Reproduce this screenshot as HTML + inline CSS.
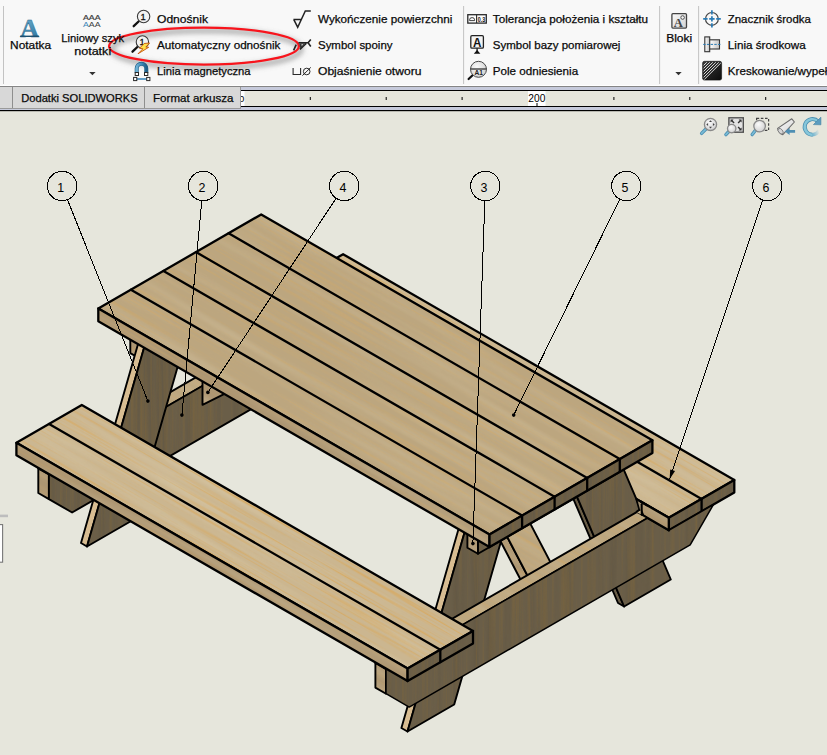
<!DOCTYPE html><html><head><meta charset="utf-8"><title>SOLIDWORKS - Automatyczny odnośnik</title>
<style>html,body{margin:0;padding:0;background:#e6e6dc;width:827px;height:755px;overflow:hidden}svg{display:block;position:absolute;left:0;top:0}text{font-family:"Liberation Sans",sans-serif}.sf{font-family:"Liberation Serif",serif}</style></head><body>
<svg width="827" height="755" viewBox="0 0 827 755">

<defs>
<filter id="fg1" x="0" y="0" width="100%" height="100%" color-interpolation-filters="sRGB">
<feTurbulence type="fractalNoise" baseFrequency="0.005 0.5" numOctaves="2" seed="7" stitchTiles="stitch" result="n"/>
<feColorMatrix in="n" type="matrix" values="0 0 0 0 0.85  0 0 0 0 0.66  0 0 0 0 0.36  3.4 0 0 0 -1.75"/>
</filter>
<filter id="fg2" x="0" y="0" width="100%" height="100%" color-interpolation-filters="sRGB">
<feTurbulence type="fractalNoise" baseFrequency="0.004 0.1" numOctaves="2" seed="11" stitchTiles="stitch" result="n"/>
<feColorMatrix in="n" type="matrix" values="0 0 0 0 0.84  0 0 0 0 0.78  0 0 0 0 0.65  0 2.4 0 0 -1.0"/>
</filter>
<filter id="fg3" x="0" y="0" width="100%" height="100%" color-interpolation-filters="sRGB">
<feTurbulence type="fractalNoise" baseFrequency="0.3 0.006" numOctaves="3" seed="5" stitchTiles="stitch" result="n"/>
<feColorMatrix in="n" type="matrix" values="0 0 0 0 0.50  0 0 0 0 0.40  0 0 0 0 0.22  2.6 0 0 0 -1.2"/>
</filter>
<filter id="fg4" x="0" y="0" width="100%" height="100%" color-interpolation-filters="sRGB">
<feTurbulence type="fractalNoise" baseFrequency="0.12 0.004" numOctaves="2" seed="9" stitchTiles="stitch" result="n"/>
<feColorMatrix in="n" type="matrix" values="0 0 0 0 0.36  0 0 0 0 0.32  0 0 0 0 0.25  0 2.2 0 0 -0.95"/>
</filter>
<pattern id="wt" width="512" height="256" patternUnits="userSpaceOnUse" patternTransform="rotate(30)">
<rect width="512" height="256" fill="#bca67f"/>
<rect width="512" height="256" filter="url(#fg2)" opacity=".3"/>
<rect width="512" height="256" filter="url(#fg1)" opacity=".4"/>
</pattern>
<pattern id="wb" width="512" height="256" patternUnits="userSpaceOnUse" patternTransform="rotate(30) translate(40 90)">
<rect width="512" height="256" fill="#cbb690"/>
<rect width="512" height="256" filter="url(#fg2)" opacity=".6"/>
<rect width="512" height="256" filter="url(#fg1)" opacity=".85"/>
</pattern>
<pattern id="ws" width="512" height="256" patternUnits="userSpaceOnUse" patternTransform="rotate(30) translate(10 30)">
<rect width="512" height="256" fill="#ad9672"/>
<rect width="512" height="256" filter="url(#fg2)" opacity=".35"/>
<rect width="512" height="256" filter="url(#fg1)" opacity=".3"/>
</pattern>
<pattern id="wd" width="256" height="512" patternUnits="userSpaceOnUse">
<rect width="256" height="512" fill="#6a5e48"/>
<rect width="256" height="512" filter="url(#fg4)" opacity=".5"/>
<rect width="256" height="512" filter="url(#fg3)" opacity=".5"/>
</pattern>
</defs>

<defs>
<filter id="sh" x="-10%" y="-50%" width="120%" height="200%"><feGaussianBlur stdDeviation="2.8"/></filter>
<linearGradient id="gA" x1="0" y1="0" x2="0" y2="1"><stop offset="0" stop-color="#6fb0cf"/><stop offset=".7" stop-color="#3b83ab"/><stop offset="1" stop-color="#1f5678"/></linearGradient>
<linearGradient id="gM" x1="0" y1="0" x2="1" y2="0"><stop offset="0" stop-color="#ffffff"/><stop offset="1" stop-color="#c4c4c4"/></linearGradient>
<linearGradient id="gB" x1="0" y1="0" x2="1" y2="1"><stop offset="0" stop-color="#fbfbfb"/><stop offset="1" stop-color="#d2d2d2"/></linearGradient>
<linearGradient id="gH" x1="0" y1="0" x2="1" y2="1"><stop offset="0" stop-color="#3c3c3c"/><stop offset="1" stop-color="#0c0c0c"/></linearGradient>
<linearGradient id="gMag" x1="0" y1="0" x2="1" y2="0"><stop offset="0" stop-color="#6fb2d6"/><stop offset=".5" stop-color="#3f8bb8"/><stop offset="1" stop-color="#1f5f88"/></linearGradient>
<linearGradient id="gT" gradientUnits="userSpaceOnUse" x1="812" y1="134" x2="819" y2="131"><stop offset="0" stop-color="#6fb3cf"/><stop offset="1" stop-color="#e6e6dc"/></linearGradient>
<radialGradient id="gL" cx=".4" cy=".35" r=".7"><stop offset="0" stop-color="#fafafa"/><stop offset="1" stop-color="#cfcfcf"/></radialGradient>
</defs>
<rect x="0" y="0" width="827" height="755" fill="#e6e6dc"/>
<rect x="0" y="0" width="827" height="86" fill="#f8f8f8"/><rect x="0" y="85" width="827" height="1" fill="#fff"/>
<rect x="0" y="86" width="827" height="1" fill="#858585"/>
<rect x="240" y="87" width="587" height="23" fill="#c6cadb"/>
<rect x="240" y="90" width="587" height="17" fill="#e6e6dc"/>
<rect x="240" y="90" width="587" height="1" fill="#000"/>
<rect x="240" y="106" width="587" height="1" fill="#000"/>
<rect x="0" y="109" width="827" height="1" fill="#c6cadb"/>
<rect x="0" y="110" width="827" height="1.2" fill="#000"/>
<rect x="309.8" y="97" width="1" height="3" fill="#000"/>
<rect x="385.7" y="97" width="1" height="3" fill="#000"/>
<rect x="461.6" y="97" width="1" height="3" fill="#000"/>
<rect x="613.4" y="97" width="1" height="3" fill="#000"/>
<rect x="689.3" y="97" width="1" height="3" fill="#000"/>
<rect x="765.2" y="97" width="1" height="3" fill="#000"/>
<rect x="241" y="91" width="3.5" height="15" fill="#fff"/>
<text x="239" y="102" font-size="9.5" text-anchor="start" fill="#000" >0</text>
<rect x="528" y="91" width="17.5" height="15" fill="#fff"/>
<text x="536.8" y="102.3" font-size="11" text-anchor="middle" fill="#000" textLength="17" lengthAdjust="spacingAndGlyphs" >200</text>
<rect x="536.5" y="103" width="1" height="3" fill="#000"/>
<rect x="0" y="87" width="240.5" height="21" fill="#d8d8d8"/>
<rect x="0" y="108" width="241" height="1" fill="#9a9a9a"/>
<rect x="240" y="87" width="1" height="22" fill="#9a9a9a"/>
<rect x="12" y="87" width="1" height="21" fill="#8e8e8e"/>
<rect x="144" y="87" width="1" height="21" fill="#8e8e8e"/>
<text x="21.2" y="102.2" font-size="11.0" text-anchor="start" fill="#0a0a0a" stroke="#0a0a0a" stroke-width="0.25" textLength="116.5" lengthAdjust="spacingAndGlyphs" >Dodatki SOLIDWORKS</text>
<text x="153" y="102.2" font-size="11.0" text-anchor="start" fill="#0a0a0a" stroke="#0a0a0a" stroke-width="0.25" textLength="80.5" lengthAdjust="spacingAndGlyphs" >Format arkusza</text>
<rect x="3.0" y="6" width="1" height="78" fill="#c3c3c3"/>
<rect x="463.1" y="6" width="1" height="78" fill="#c3c3c3"/>
<rect x="659.1" y="6" width="1" height="78" fill="#c3c3c3"/>
<rect x="698.1" y="6" width="1" height="78" fill="#c3c3c3"/>
<ellipse cx="206.4" cy="49.2" rx="94.6" ry="18.4" fill="none" stroke="#707070" stroke-opacity=".5" stroke-width="5.5" filter="url(#sh)"/>
<ellipse cx="204" cy="46.15" rx="94.9" ry="18.45" fill="none" stroke="#f8141c" stroke-width="2.3"/>
<text x="30.6" y="48.9" font-size="11.0" text-anchor="middle" fill="#0a0a0a" stroke="#0a0a0a" stroke-width="0.25" textLength="41" lengthAdjust="spacingAndGlyphs" >Notatka</text>
<text x="92.7" y="41.9" font-size="11.0" text-anchor="middle" fill="#0a0a0a" stroke="#0a0a0a" stroke-width="0.25" textLength="63" lengthAdjust="spacingAndGlyphs" >Liniowy szyk</text>
<text x="92.7" y="54.6" font-size="11.0" text-anchor="middle" fill="#0a0a0a" stroke="#0a0a0a" stroke-width="0.25" textLength="37" lengthAdjust="spacingAndGlyphs" >notatki</text>
<polygon points="89.2,72 95.6,72 92.4,75.2" fill="#333"/>
<text x="157" y="22.8" font-size="11.0" text-anchor="start" fill="#0a0a0a" stroke="#0a0a0a" stroke-width="0.25" textLength="51" lengthAdjust="spacingAndGlyphs" >Odnośnik</text>
<text x="157" y="48.8" font-size="11.0" text-anchor="start" fill="#0a0a0a" stroke="#0a0a0a" stroke-width="0.25" textLength="123.4" lengthAdjust="spacingAndGlyphs" >Automatyczny odnośnik</text>
<text x="157" y="74.8" font-size="11.0" text-anchor="start" fill="#0a0a0a" stroke="#0a0a0a" stroke-width="0.25" textLength="93.6" lengthAdjust="spacingAndGlyphs" >Linia magnetyczna</text>
<text x="318" y="22.8" font-size="11.0" text-anchor="start" fill="#0a0a0a" stroke="#0a0a0a" stroke-width="0.25" textLength="134.4" lengthAdjust="spacingAndGlyphs" >Wykończenie powierzchni</text>
<text x="318" y="48.8" font-size="11.0" text-anchor="start" fill="#0a0a0a" stroke="#0a0a0a" stroke-width="0.25" textLength="74.5" lengthAdjust="spacingAndGlyphs" >Symbol spoiny</text>
<text x="318" y="74.8" font-size="11.0" text-anchor="start" fill="#0a0a0a" stroke="#0a0a0a" stroke-width="0.25" textLength="103.4" lengthAdjust="spacingAndGlyphs" >Objaśnienie otworu</text>
<text x="492.8" y="22.8" font-size="11.0" text-anchor="start" fill="#0a0a0a" stroke="#0a0a0a" stroke-width="0.25" textLength="155.2" lengthAdjust="spacingAndGlyphs" >Tolerancja położenia i kształtu</text>
<text x="492.8" y="48.8" font-size="11.0" text-anchor="start" fill="#0a0a0a" stroke="#0a0a0a" stroke-width="0.25" textLength="127.6" lengthAdjust="spacingAndGlyphs" >Symbol bazy pomiarowej</text>
<text x="492.8" y="74.8" font-size="11.0" text-anchor="start" fill="#0a0a0a" stroke="#0a0a0a" stroke-width="0.25" textLength="85.3" lengthAdjust="spacingAndGlyphs" >Pole odniesienia</text>
<text x="727.8" y="22.8" font-size="11.0" text-anchor="start" fill="#0a0a0a" stroke="#0a0a0a" stroke-width="0.25" textLength="83" lengthAdjust="spacingAndGlyphs" >Znacznik środka</text>
<text x="727.8" y="48.8" font-size="11.0" text-anchor="start" fill="#0a0a0a" stroke="#0a0a0a" stroke-width="0.25" textLength="78" lengthAdjust="spacingAndGlyphs" >Linia środkowa</text>
<text x="727.8" y="74.8" font-size="11.0" text-anchor="start" fill="#0a0a0a" stroke="#0a0a0a" stroke-width="0.25" textLength="99.5" lengthAdjust="spacingAndGlyphs" >Kreskowanie/wypeł</text>
<text x="679.2" y="41.8" font-size="11.0" text-anchor="middle" fill="#0a0a0a" stroke="#0a0a0a" stroke-width="0.25" textLength="26" lengthAdjust="spacingAndGlyphs" >Bloki</text>
<polygon points="675.3,72 681.7,72 678.5,75.2" fill="#333"/>
<text class="sf" x="29.6" y="36.6" font-size="26" font-weight="bold" text-anchor="middle" fill="url(#gA)" stroke="#2a6386" stroke-width=".4" textLength="19" lengthAdjust="spacingAndGlyphs">A</text>
<rect x="20.2" y="35.6" width="18.6" height="1.4" fill="#1d5070"/>
<text x="83" y="20.2" font-size="7.4" fill="#3c3c3c" stroke="#3c3c3c" stroke-width=".2" textLength="17.6" lengthAdjust="spacingAndGlyphs">AAA</text>
<text x="83" y="27.2" font-size="7.4" fill="#3c3c3c" stroke-width=".2" textLength="17.6" lengthAdjust="spacingAndGlyphs"><tspan fill="#3b86b8">A</tspan>AA</text>
<line x1="139.1" y1="21.0" x2="133.7" y2="26.2" stroke="#111" stroke-width="2.3" stroke-linecap="round"/><circle cx="143.6" cy="16.5" r="6.2" fill="#f3f3f3" stroke="#3a3a3a" stroke-width="1.1"/><text x="143.2" y="19.8" font-size="9.4" text-anchor="middle" fill="#111" stroke="#111" stroke-width=".3">1</text>
<line x1="137.9" y1="46.5" x2="132.5" y2="51.7" stroke="#111" stroke-width="2.3" stroke-linecap="round"/><circle cx="142.4" cy="42" r="6.2" fill="#f3f3f3" stroke="#3a3a3a" stroke-width="1.1"/><text x="142.0" y="45.3" font-size="9.4" text-anchor="middle" fill="#111" stroke="#111" stroke-width=".3">1</text>
<polygon points="149.6,43 144.1,43.5 139.5,48.3 142.9,48.8 138,53.8 148.7,47.3 145.8,47.1" fill="#ffe24a" stroke="#c4560c" stroke-width=".9" stroke-linejoin="round"/>
<path d="M136.7,73 V68.6 a4.8,4.8 0 0 1 9.6,0 V73" fill="none" stroke="#1f5f88" stroke-width="4"/>
<path d="M136.7,73 V68.6 a4.8,4.8 0 0 1 9.6,0 V73" fill="none" stroke="url(#gMag)" stroke-width="2.8"/>
<rect x="135.2" y="72.5" width="3.3" height="3" fill="#fff" stroke="#2a2a2a" stroke-width="1"/>
<rect x="144.5" y="72.5" width="3.3" height="3" fill="#fff" stroke="#2a2a2a" stroke-width="1"/>
<line x1="136" y1="79" x2="147" y2="79" stroke="#2f7fb6" stroke-width="1.5"/>
<rect x="133.6" y="77.4" width="3.2" height="3.2" fill="#fff" stroke="#2a2a2a" stroke-width="1"/>
<rect x="146.7" y="77.4" width="3.2" height="3.2" fill="#fff" stroke="#2a2a2a" stroke-width="1"/>
<path d="M293.4,19.4 H301.6 M293.8,19.6 L297.7,27.2 L305.3,10.9 H310.8" fill="none" stroke="#222" stroke-width="1.5" stroke-linejoin="miter"/>
<path d="M293.6,50.3 L296.2,44.6 M298.5,42.8 H308.1 L310.8,39.4 M308.1,42.8 L310.8,46.4 M299.9,49.3 L306.2,43.5" fill="none" stroke="#222" stroke-width="1.6"/>
<polygon points="299.2,43.2 305.6,43.2 300.2,48.6" fill="#333"/>
<polygon points="301.4,44.2 303.4,44.2 301.8,46" fill="#eee"/>
<path d="M293.1,68.1 V74.5 H300.6 V68.1" fill="none" stroke="#2a2a2a" stroke-width="1.1"/>
<circle cx="306.7" cy="71.5" r="3.3" fill="none" stroke="#2a2a2a" stroke-width="1"/>
<line x1="302.4" y1="75.6" x2="310.8" y2="67.4" stroke="#2a2a2a" stroke-width="1"/>
<rect x="467.8" y="14.7" width="18.5" height="8.4" fill="#fdfdfd" stroke="#2a2a2a" stroke-width="1.3"/>
<line x1="476.6" y1="14.7" x2="476.6" y2="23.1" stroke="#2a2a2a" stroke-width="1.1"/>
<path d="M469.6,20.6 H474.6 V19.8 a2.5,2.2 0 0 0 -5,0 Z" fill="none" stroke="#2a2a2a" stroke-width=".9"/>
<text x="481.5" y="21.7" font-size="7.2" font-weight="bold" text-anchor="middle" fill="#111" textLength="7.4" lengthAdjust="spacingAndGlyphs">0.3</text>
<rect x="470.8" y="35.7" width="12.6" height="12.4" rx="1.2" fill="#f4f4f4" stroke="#222" stroke-width="1.3"/>
<text x="477.1" y="46.6" font-size="12.4" font-weight="bold" text-anchor="middle" fill="#111" textLength="8.4" lengthAdjust="spacingAndGlyphs">A</text>
<line x1="477.1" y1="48.2" x2="477.1" y2="51" stroke="#222" stroke-width="1.4"/>
<polygon points="473.8,53.8 480.4,53.8 477.1,50" fill="#111"/>
<line x1="472.6" y1="75.2" x2="468.6" y2="79" stroke="#111" stroke-width="2.2" stroke-linecap="round"/>
<circle cx="478.5" cy="69.3" r="8" fill="url(#gL)" stroke="#4a4a4a" stroke-width="1"/>
<line x1="470.5" y1="69" x2="486.5" y2="69" stroke="#333" stroke-width="1.3"/>
<text x="478.6" y="75.3" font-size="6.6" font-weight="bold" text-anchor="middle" fill="#222">A1</text>
<rect x="671.9" y="13.7" width="14.6" height="14.4" rx="1" fill="url(#gB)" stroke="#444" stroke-width="1.3"/>
<text class="sf" x="678.2" y="26.6" font-size="12.6" font-weight="bold" text-anchor="middle" fill="#444">A</text>
<circle cx="682.6" cy="17.5" r="1.8" fill="#f4f4f4" stroke="#444" stroke-width=".9"/>
<circle cx="711.9" cy="18.9" r="6.4" fill="none" stroke="#444" stroke-width="1.2"/>
<path d="M711.9,10.2 V14.6 M711.9,23.2 V27.6 M703.2,18.9 H707.6 M716.2,18.9 H720.8 M709.2,18.9 H714.6 M711.9,16.2 V21.6" fill="none" stroke="#2a7bb5" stroke-width="1.7"/>
<rect x="704.8" y="36.9" width="4.9" height="14.8" fill="url(#gM)" stroke="#333" stroke-width="1.1"/>
<rect x="709.7" y="39.8" width="9.8" height="9.2" fill="url(#gM)" stroke="#333" stroke-width="1.1"/>
<line x1="703.2" y1="44.4" x2="720.8" y2="44.4" stroke="#2a7bb5" stroke-width="1" stroke-dasharray="2.4 1.3"/>
<rect x="702.6" y="61.3" width="19" height="18.8" rx="1.8" fill="url(#gH)" stroke="#111" stroke-width=".6"/>
<path d="M703.6,65.4 L706.8,62.3 M703.6,68.4 L709.8,62.3 M703.6,71.4 L712.8,62.3 M703.6,74.4 L715.8,62.3 M703.6,77.4 L718.8,62.3 M704.4,79.4 L720.8,63" fill="none" stroke="#f0f0f0" stroke-width=".9"/>
<line x1="706.2" y1="128.7" x2="701.6" y2="133.4" stroke="#4d8fb2" stroke-width="3.4" stroke-linecap="round"/><line x1="706.2" y1="128.7" x2="701.6" y2="133.4" stroke="#79bcd6" stroke-width="1.6" stroke-linecap="round"/><circle cx="710.5" cy="124.4" r="6.1" fill="url(#gL)" stroke="#8a8a8a" stroke-width="1.3"/>
<path d="M710.5,120.2 l1.5,1.8 h-3 z M710.5,128.6 l1.5,-1.8 h-3 z M706.3,124.4 l1.8,-1.5 v3 z M714.7,124.4 l-1.8,-1.5 v3 z" fill="#444"/>
<rect x="728.9" y="117.8" width="14.4" height="14.4" fill="#e2e2e2" stroke="#505050" stroke-width="1.4"/>
<path d="M730.6,119.6 h3 l-1,1 l2,2 l-1,1 l-2,-2 l-1,1 z M741.6,119.6 v3 l-1,-1 l-2,2 l-1,-1 l2,-2 l-1,-1 z M741.6,130.6 h-3 l1,-1 l-2,-2 l1,-1 l2,2 l1,-1 z" fill="#333"/>
<line x1="728.8" y1="131.5" x2="725.9" y2="134.6" stroke="#4d8fb2" stroke-width="3.4" stroke-linecap="round"/><line x1="728.8" y1="131.5" x2="725.9" y2="134.6" stroke="#79bcd6" stroke-width="1.6" stroke-linecap="round"/><circle cx="731.7" cy="128.6" r="4.2" fill="url(#gL)" stroke="#8a8a8a" stroke-width="1.3"/>
<rect x="756.6" y="118.4" width="12" height="12" fill="none" stroke="#444" stroke-width="1.2" stroke-dasharray="2.6 1.6"/>
<line x1="755.5" y1="130.2" x2="752.2" y2="134.6" stroke="#4d8fb2" stroke-width="3.4" stroke-linecap="round"/><line x1="755.5" y1="130.2" x2="752.2" y2="134.6" stroke="#79bcd6" stroke-width="1.6" stroke-linecap="round"/><circle cx="759.6" cy="126.1" r="5.8" fill="url(#gL)" stroke="#8a8a8a" stroke-width="1.3"/>
<path d="M777.6,128.4 L791.8,118.8 L794.4,122 L782.8,134.6 Q778.6,133.4 777.6,128.4 Z" fill="url(#gB)" stroke="#6a6a6a" stroke-width="1.1" stroke-linejoin="round"/>
<ellipse cx="780.6" cy="131.2" rx="2" ry="3.2" transform="rotate(-40 780.6 131.2)" fill="#d6d6d6" stroke="#777" stroke-width=".8"/>
<path d="M784.9,131.4 L789.6,127.8 V130 H795.1 V132.8 H789.6 V135 Z" fill="#4f8fb3"/>
<path d="M812.6,134.7 A7.8,7.8 0 1 1 818.2,121.6" fill="none" stroke="#4a8fb0" stroke-width="4"/>
<path d="M812.6,134.7 A7.8,7.8 0 1 1 818.2,121.6" fill="none" stroke="#86c6da" stroke-width="2.4"/>
<path d="M812.4,134.7 A7.8,7.8 0 0 0 819,130.4" fill="none" stroke="url(#gT)" stroke-width="3.6"/>
<polygon points="813.4,124.6 820.9,117.2 820.9,124.8" fill="#5b9cc0" stroke="#3f7fa0" stroke-width=".6"/>
<rect x="0" y="514.6" width="8" height="2.6" fill="#bdbdbd"/>
<rect x="-2" y="524.6" width="4.6" height="37.6" fill="#fff" stroke="#777" stroke-width="1.1"/>
<g id="drawing">
<polygon points="277.7,291.9 343.1,254.2 734.3,480.0 668.8,517.8" fill="url(#wb)" stroke="#000" stroke-width="2.3" stroke-linejoin="round" />
<polygon points="277.7,291.9 668.8,517.8 668.8,530.3 277.7,304.4" fill="url(#ws)" stroke="#000" stroke-width="2.3" stroke-linejoin="round" />
<polygon points="668.8,517.8 734.3,480.0 734.3,492.5 668.8,530.3" fill="url(#wd)" stroke="#000" stroke-width="2.3" stroke-linejoin="round" />
<line x1="310.4" y1="273.1" x2="701.6" y2="498.9" stroke="#000" stroke-width="2.3" stroke-linecap="round" />
<line x1="701.6" y1="498.9" x2="701.6" y2="511.4" stroke="#000" stroke-width="2.3" stroke-linecap="round" />
<polygon points="130.3,328.4 140.9,334.6 140.9,359.2 130.3,353.1" fill="url(#ws)" stroke="#000" stroke-width="1.9" stroke-linejoin="round" />
<polygon points="140.9,334.6 284.4,251.8 284.4,276.4 140.9,359.2" fill="url(#wd)" stroke="#000" stroke-width="1.9" stroke-linejoin="round" />
<polygon points="38.3,468.4 365.7,279.3 376.4,285.5 48.9,474.5" fill="url(#wt)" stroke="#000" stroke-width="1.9" stroke-linejoin="round" />
<polygon points="38.3,468.4 48.9,474.5 48.9,499.1 38.3,493.0" fill="url(#ws)" stroke="#000" stroke-width="1.9" stroke-linejoin="round" />
<polygon points="48.9,474.5 376.4,285.5 376.4,310.1 353.2,350.2 72.1,512.5 48.9,499.1" fill="url(#wd)" stroke="#000" stroke-width="1.9" stroke-linejoin="round" />
<polygon points="297.6,417.9 303.6,421.4 243.9,282.1 237.8,278.6" fill="url(#wd)" stroke="#000" stroke-width="1.9" stroke-linejoin="round" />
<polygon points="303.6,421.4 350.4,394.4 290.6,255.1 243.9,282.1" fill="url(#wd)" stroke="#000" stroke-width="1.9" stroke-linejoin="round" />
<polygon points="81.0,543.0 87.0,546.5 146.8,338.2 140.7,334.7" fill="#d8bd92" stroke="#000" stroke-width="1.9" stroke-linejoin="round" />
<polygon points="87.0,546.5 133.8,519.5 193.6,311.2 146.8,338.2" fill="url(#wd)" stroke="#000" stroke-width="1.9" stroke-linejoin="round" />
<polygon points="202.5,381.3 202.5,404.8 254.5,378.8 254.5,341.3" fill="url(#ws)" stroke="#000" stroke-width="1.9" stroke-linejoin="round" />
<polygon points="618.0,603.0 624.1,606.5 564.3,467.1 558.2,463.6" fill="url(#wd)" stroke="#000" stroke-width="1.9" stroke-linejoin="round" />
<polygon points="624.1,606.5 670.8,579.5 611.1,440.1 564.3,467.1" fill="url(#wd)" stroke="#000" stroke-width="1.9" stroke-linejoin="round" />
<polygon points="401.4,728.0 407.5,731.5 467.2,523.2 461.2,519.7" fill="#d8bd92" stroke="#000" stroke-width="1.9" stroke-linejoin="round" />
<polygon points="407.5,731.5 454.2,704.5 514.0,496.2 467.2,523.2" fill="url(#wd)" stroke="#000" stroke-width="1.9" stroke-linejoin="round" />
<polygon points="525.2,588.5 532.0,584.3 485.5,495.3 478.7,499.5" fill="url(#ws)" stroke="#000" stroke-width="1.9" stroke-linejoin="round" />
<polygon points="532.0,584.3 554.9,570.7 508.4,481.7 485.5,495.3" fill="url(#wt)" stroke="#000" stroke-width="1.9" stroke-linejoin="round" />
<polygon points="467.4,523.1 478.0,529.2 478.0,553.8 467.4,547.7" fill="url(#ws)" stroke="#000" stroke-width="1.9" stroke-linejoin="round" />
<polygon points="478.0,529.2 621.5,446.3 621.5,470.9 478.0,553.8" fill="url(#wd)" stroke="#000" stroke-width="1.9" stroke-linejoin="round" />
<polygon points="375.4,663.0 637.1,511.9 647.6,518.0 386.0,669.1" fill="url(#wt)" stroke="#000" stroke-width="1.9" stroke-linejoin="round" />
<polygon points="375.4,663.0 386.0,669.1 386.0,693.7 375.4,687.6" fill="url(#ws)" stroke="#000" stroke-width="1.9" stroke-linejoin="round" />
<polygon points="386.0,669.1 647.6,518.0 668.8,530.3 713.4,504.6 713.4,504.6 690.2,544.9 409.2,707.1 386.0,693.7" fill="url(#wd)" stroke="#000" stroke-width="1.5" stroke-linejoin="round" />
<polygon points="647.6,505.6 668.8,517.8 668.8,530.3 647.6,518.0" fill="url(#ws)" stroke="none" stroke-width="2.3" stroke-linejoin="round" />
<line x1="640.7" y1="501.6" x2="668.8" y2="517.8" stroke="#000" stroke-width="2.3" stroke-linecap="round" />
<line x1="647.6" y1="518.0" x2="668.8" y2="530.3" stroke="#000" stroke-width="2.3" stroke-linecap="round" />
<line x1="668.8" y1="517.8" x2="668.8" y2="530.3" stroke="#000" stroke-width="2.3" stroke-linecap="round" />
<polygon points="636.8,512.2 639.2,509.9 641.7,510.8 641.7,514.8" fill="#c9b38c" stroke="none" stroke-width="2.3" stroke-linejoin="round" />
<polygon points="636.9,500.6 641.7,504.4 641.7,510.8 639.2,509.9" fill="#9d8d70" stroke="none" stroke-width="2.3" stroke-linejoin="round" />
<line x1="636.8" y1="511.6" x2="639.3" y2="509.9" stroke="#000" stroke-width="1.9" stroke-linecap="round" />
<line x1="636.4" y1="499.4" x2="639.3" y2="509.9" stroke="#000" stroke-width="1.7" stroke-linecap="round" />
<line x1="641.7" y1="504.2" x2="641.7" y2="514.8" stroke="#000" stroke-width="2.0" stroke-linecap="round" />
<polygon points="98.3,308.5 261.2,214.4 652.4,440.3 489.5,534.4" fill="url(#wt)" stroke="#000" stroke-width="2.3" stroke-linejoin="round" />
<polygon points="98.3,308.5 489.5,534.4 489.5,547.1 98.3,321.2" fill="url(#ws)" stroke="#000" stroke-width="2.3" stroke-linejoin="round" />
<polygon points="489.5,534.4 652.4,440.3 652.4,453.0 489.5,547.1" fill="url(#wd)" stroke="#000" stroke-width="2.3" stroke-linejoin="round" />
<line x1="130.9" y1="289.7" x2="522.1" y2="515.5" stroke="#000" stroke-width="2.3" stroke-linecap="round" />
<line x1="522.1" y1="515.5" x2="522.1" y2="528.2" stroke="#000" stroke-width="2.3" stroke-linecap="round" />
<line x1="163.5" y1="270.9" x2="554.6" y2="496.7" stroke="#000" stroke-width="2.3" stroke-linecap="round" />
<line x1="554.6" y1="496.7" x2="554.6" y2="509.4" stroke="#000" stroke-width="2.3" stroke-linecap="round" />
<line x1="196.0" y1="252.1" x2="587.2" y2="477.9" stroke="#000" stroke-width="2.3" stroke-linecap="round" />
<line x1="587.2" y1="477.9" x2="587.2" y2="490.6" stroke="#000" stroke-width="2.3" stroke-linecap="round" />
<line x1="228.6" y1="233.3" x2="619.8" y2="459.1" stroke="#000" stroke-width="2.3" stroke-linecap="round" />
<line x1="619.8" y1="459.1" x2="619.8" y2="471.8" stroke="#000" stroke-width="2.3" stroke-linecap="round" />
<polygon points="16.4,442.8 81.8,405.0 473.0,630.9 407.6,668.6" fill="url(#wb)" stroke="#000" stroke-width="2.3" stroke-linejoin="round" />
<polygon points="16.4,442.8 407.6,668.6 407.6,681.1 16.4,455.3" fill="url(#ws)" stroke="#000" stroke-width="2.3" stroke-linejoin="round" />
<polygon points="407.6,668.6 473.0,630.9 473.0,643.4 407.6,681.1" fill="url(#wd)" stroke="#000" stroke-width="2.3" stroke-linejoin="round" />
<line x1="49.1" y1="423.9" x2="440.3" y2="649.8" stroke="#000" stroke-width="2.3" stroke-linecap="round" />
<line x1="440.3" y1="649.8" x2="440.3" y2="662.2" stroke="#000" stroke-width="2.3" stroke-linecap="round" />
<line x1="67.5" y1="199.7" x2="147.9" y2="401.1" stroke="#000" stroke-width="1" shape-rendering="crispEdges"/>
<circle cx="147.9" cy="401.1" r="1.8" fill="#000"/>
<circle cx="62.1" cy="186.0" r="14.7" fill="none" stroke="#000" stroke-width="1" shape-rendering="crispEdges"/>
<text x="60.8" y="191.9" font-size="12.4" text-anchor="middle" fill="#000" class="bt">1</text>
<line x1="201.8" y1="200.6" x2="181.9" y2="415.1" stroke="#000" stroke-width="1" shape-rendering="crispEdges"/>
<circle cx="181.9" cy="415.1" r="1.8" fill="#000"/>
<circle cx="203.2" cy="186.0" r="14.7" fill="none" stroke="#000" stroke-width="1" shape-rendering="crispEdges"/>
<text x="201.9" y="191.9" font-size="12.4" text-anchor="middle" fill="#000" class="bt">2</text>
<line x1="336.1" y1="198.3" x2="207.9" y2="392.4" stroke="#000" stroke-width="1" shape-rendering="crispEdges"/>
<circle cx="207.9" cy="392.4" r="1.8" fill="#000"/>
<circle cx="344.2" cy="186.0" r="14.7" fill="none" stroke="#000" stroke-width="1" shape-rendering="crispEdges"/>
<text x="342.9" y="191.9" font-size="12.4" text-anchor="middle" fill="#000" class="bt">4</text>
<line x1="484.8" y1="200.7" x2="472.9" y2="543.6" stroke="#000" stroke-width="1" shape-rendering="crispEdges"/>
<circle cx="472.9" cy="543.6" r="1.8" fill="#000"/>
<circle cx="485.3" cy="186.0" r="14.7" fill="none" stroke="#000" stroke-width="1" shape-rendering="crispEdges"/>
<text x="484.0" y="191.9" font-size="12.4" text-anchor="middle" fill="#000" class="bt">3</text>
<line x1="619.8" y1="199.2" x2="513.7" y2="415.1" stroke="#000" stroke-width="1" shape-rendering="crispEdges"/>
<circle cx="513.7" cy="415.1" r="1.8" fill="#000"/>
<circle cx="626.3" cy="186.0" r="14.7" fill="none" stroke="#000" stroke-width="1" shape-rendering="crispEdges"/>
<text x="625.0" y="191.9" font-size="12.4" text-anchor="middle" fill="#000" class="bt">5</text>
<line x1="762.7" y1="199.9" x2="669.6" y2="479.3" stroke="#000" stroke-width="1" shape-rendering="crispEdges"/>
<polygon points="669.6,479.3 670.2,469.5 675.0,471.1" fill="#000"/>
<circle cx="767.3" cy="186.0" r="14.7" fill="none" stroke="#000" stroke-width="1" shape-rendering="crispEdges"/>
<text x="766.0" y="191.9" font-size="12.4" text-anchor="middle" fill="#000" class="bt">6</text>
</g>
</svg></body></html>
